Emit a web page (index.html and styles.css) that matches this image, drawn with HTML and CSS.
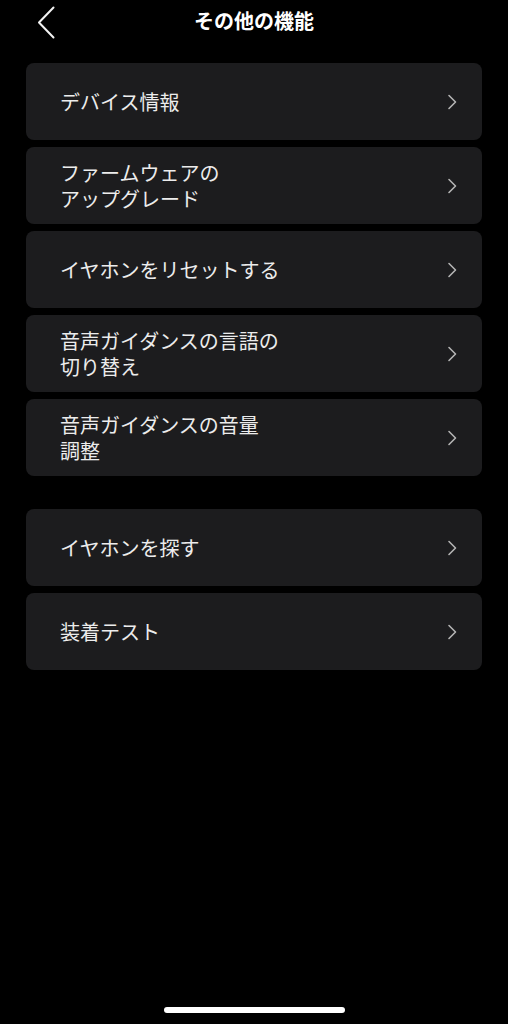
FILE: index.html
```html
<!DOCTYPE html>
<html lang="ja">
<head>
<meta charset="utf-8">
<title>その他の機能</title>
<link rel="stylesheet" href="styles.css">
</head>
<body>
<div class="screen">
  <header class="nav">
    <div class="nav-left">
      <svg class="back" width="18" height="33" viewBox="0 0 18 33"><path d="M16.5 1.5 L2 16.5 L16.5 31.5" fill="none" stroke="#f2f2f2" stroke-width="2" stroke-linecap="round" stroke-linejoin="round"/></svg>
    </div>
    <h1 class="title">その他の機能</h1>
    <div class="nav-right"></div>
  </header>
  <main class="content">
    <section class="group">
      <div class="row"><div class="label"><span class="line">デバイス情報</span></div><svg class="chev" width="10" height="16" viewBox="0 0 10 16"><path d="M2 1.5 L8.5 8 L2 14.5" fill="none" stroke="#b4b4b4" stroke-width="1.6" stroke-linecap="round" stroke-linejoin="round"/></svg></div>
      <div class="row"><div class="label"><span class="line">ファームウェアの</span><span class="line">アップグレード</span></div><svg class="chev" width="10" height="16" viewBox="0 0 10 16"><path d="M2 1.5 L8.5 8 L2 14.5" fill="none" stroke="#b4b4b4" stroke-width="1.6" stroke-linecap="round" stroke-linejoin="round"/></svg></div>
      <div class="row"><div class="label"><span class="line">イヤホンをリセットする</span></div><svg class="chev" width="10" height="16" viewBox="0 0 10 16"><path d="M2 1.5 L8.5 8 L2 14.5" fill="none" stroke="#b4b4b4" stroke-width="1.6" stroke-linecap="round" stroke-linejoin="round"/></svg></div>
      <div class="row"><div class="label"><span class="line">音声ガイダンスの言語の</span><span class="line">切り替え</span></div><svg class="chev" width="10" height="16" viewBox="0 0 10 16"><path d="M2 1.5 L8.5 8 L2 14.5" fill="none" stroke="#b4b4b4" stroke-width="1.6" stroke-linecap="round" stroke-linejoin="round"/></svg></div>
      <div class="row"><div class="label"><span class="line">音声ガイダンスの音量</span><span class="line">調整</span></div><svg class="chev" width="10" height="16" viewBox="0 0 10 16"><path d="M2 1.5 L8.5 8 L2 14.5" fill="none" stroke="#b4b4b4" stroke-width="1.6" stroke-linecap="round" stroke-linejoin="round"/></svg></div>
    </section>
    <section class="group">
      <div class="row"><div class="label"><span class="line">イヤホンを探す</span></div><svg class="chev" width="10" height="16" viewBox="0 0 10 16"><path d="M2 1.5 L8.5 8 L2 14.5" fill="none" stroke="#b4b4b4" stroke-width="1.6" stroke-linecap="round" stroke-linejoin="round"/></svg></div>
      <div class="row"><div class="label"><span class="line">装着テスト</span></div><svg class="chev" width="10" height="16" viewBox="0 0 10 16"><path d="M2 1.5 L8.5 8 L2 14.5" fill="none" stroke="#b4b4b4" stroke-width="1.6" stroke-linecap="round" stroke-linejoin="round"/></svg></div>
    </section>
  </main>
  <div class="home-bar"></div>
</div>
</body>
</html>
```

FILE: styles.css
```css
* { box-sizing: border-box; }
html, body {
  margin: 0;
  padding: 0;
  background: #000;
}
body {
  font-family: "Noto Sans CJK JP", "Noto Sans", sans-serif;
  color: #ececec;
}
.screen {
  min-height: 100vh;
  display: flex;
  flex-direction: column;
}
.nav {
  height: 44px;
  display: grid;
  grid-template-columns: 1fr auto 1fr;
  align-items: center;
}
.nav-left {
  display: flex;
  align-items: center;
  padding-left: 37px;
  padding-top: 1px;
}
.back { display: block; }
.title {
  margin: 0;
  font-size: 20px;
  font-weight: 700;
  color: #fff;
  line-height: 1;
  padding-bottom: 2px;
}
.content {
  padding: 19px 26px 0;
  display: flex;
  flex-direction: column;
  gap: 33px;
}
.group {
  display: flex;
  flex-direction: column;
  gap: 7px;
}
.row {
  height: 77px;
  background: #1c1c1e;
  border-radius: 8px;
  display: flex;
  align-items: center;
  justify-content: space-between;
  padding: 0 25px 0 34px;
}
.label {
  display: flex;
  flex-direction: column;
  gap: 2px;
  padding-top: 1px;
}
.line {
  display: block;
  font-size: 20px;
  font-weight: 400;
  line-height: 24px;
  color: #ececec;
}
.chev { display: block; flex: none; }
.home-bar {
  margin: auto auto 11px;
  width: 181px;
  height: 6px;
  border-radius: 3px;
  background: #fff;
}
```
